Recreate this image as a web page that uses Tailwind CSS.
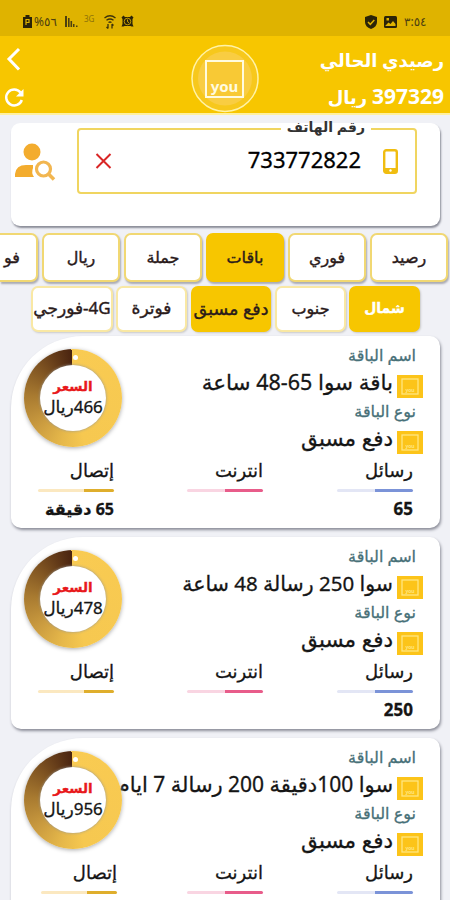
<!DOCTYPE html>
<html lang="ar" dir="rtl">
<head>
  <meta charset="UTF-8">
  <meta name="viewport" content="width=device-width, initial-scale=1.0">
  <title>رصيدي الحالي</title>
  <script src="https://cdn.jsdelivr.net/npm/@tailwindcss/browser@4"></script>
</head>
<body class="bg-[#f0f1f6] h-[900px] overflow-hidden whitespace-nowrap text-[#151515] font-['Noto_Sans','DejaVu_Sans',sans-serif]">

  <!-- shared icons -->
  <svg class="hidden">
    <symbol id="logo" viewBox="0 0 26 23">
      <rect width="26" height="23" fill="#fcc419"/>
      <rect x="5" y="4" width="16" height="15" fill="none" stroke="#ffe680" stroke-width="1.3"/>
      <text x="13" y="17.3" font-size="5" font-weight="bold" text-anchor="middle" fill="#ffe680" direction="ltr">you</text>
    </symbol>
  </svg>

  <!-- status bar -->
  <div dir="ltr" class="h-9 bg-[#dfb300] flex items-center pt-[7px] pl-[23px] pr-[22px] text-[#4d4010]">
    <svg class="w-[9px] h-[13px]" viewBox="0 0 9 13"><path d="M2.500 0h4v2H9v11H0V2h2.500z" fill="#2b2408"/><path d="M3 10V4.500h3v3H3" fill="none" stroke="#dfb300" stroke-width="1.200"/></svg>
    <span class="ml-[2px] w-[25px] text-[12px] leading-none">%٥٦</span>
    <svg class="ml-[6px] w-[13px] h-[11px]" viewBox="0 0 13 11" fill="#4d4010"><path d="M0 0h2v11H0zM3 2h1.600v9H3zM5.500 5h1.600v6H5.500zM8 8h1.500v3H8zM11 9.500h1.500V11H11z"/></svg>
    <span class="ml-[6px] w-[10px] text-[8px] leading-none -mt-1.5 text-[#8d7208]">3G</span>
    <svg class="ml-[10px] w-[12px] h-[14px]" viewBox="0 0 12 14" fill="none" stroke="#3d330b" stroke-width="1.300"><path d="M.5 3q5.500-4.500 11 0M2.500 5.300q3.500-2.600 7 0M4.500 7.500q1.500-1 3 0"/><path d="M4 9v4.500M2.500 12 4 13.500M8 13.500V9M9.500 10.500 8 9"/></svg>
    <svg class="ml-[5px] w-[13px] h-[13px]" viewBox="0 0 13 13"><path d="M.5 2.500 2.500.5 4 2h5l1.500-1.500 2 2L11.500 4v5l1 2.500h-2L9.500 11h-6l-1 .5h-2L1.500 9V4z" fill="#2b2408"/><circle cx="6.500" cy="6.500" r="3.300" fill="none" stroke="#dfb300" stroke-width=".8"/><path d="M6.500 4.500v2.200l1.500 1" fill="none" stroke="#dfb300" stroke-width=".9"/></svg>
    <svg class="ml-auto w-[12px] h-[14px]" viewBox="0 0 12 14"><path d="M6 0l6 2v5q0 5-6 7-6-2-6-7V2z" fill="#2b2408"/><path d="M3 7l2.300 2.300L9.300 5" fill="none" stroke="#dfb300" stroke-width="1.500"/></svg>
    <svg class="ml-[7px] w-[13px] h-[12px]" viewBox="0 0 13 12"><rect width="13" height="12" rx="1.500" fill="#2b2408"/><path d="M1.500 9.500l3-3 2 1.500 2.500-3 2.500 3v2h-10zM2.500 2h2.500v2.500H2.500z" fill="#dfb300"/></svg>
    <span class="ml-[7px] w-[24px] text-[12px] leading-none">٣:٥٤</span>
  </div>

  <!-- header -->
  <header class="h-[79px] bg-[#f7c600] border-b-2 border-[#fff0a0] grid grid-cols-3 text-white">
    <div class="pr-[6px] text-[18px] font-bold">
      <div class="h-[45px] leading-[48px]">رصيدي الحالي</div>
      <div class="h-[32px] leading-[30px]"><span class="text-[21px]">397329</span> ريال</div>
    </div>
    <div class="flex justify-center pt-[8px]">
      <svg class="w-[68px] h-[70px] shrink-0" viewBox="0 0 68 70">
        <circle cx="34" cy="34.500" r="33" fill="#f7c81c" stroke="#fff3a8" stroke-width="1.500"/>
        <circle cx="34" cy="34.500" r="27" fill="#f9cd42"/>
        <rect x="15" y="17" width="37" height="36" fill="#f8c935" stroke="#fffbe0" stroke-width="2"/>
        <text x="33.500" y="48" font-size="15" font-weight="bold" text-anchor="middle" fill="#fffbe0" direction="ltr">you</text>
      </svg>
    </div>
    <div class="flex flex-col items-end pl-[4px] pt-[11px]">
      <svg class="w-[18px] h-[24px]" viewBox="0 0 18 24"><path d="M15 2 5 12l10 10.500" fill="none" stroke="#fff" stroke-width="3"/></svg>
      <svg class="mt-[16px] w-[21px] h-[21px]" viewBox="0 0 21 21"><path d="M16.500 5.500A8 8 0 1 0 17.800 13" fill="none" stroke="#fff" stroke-width="2.500"/><path d="M19.500 2v7.500H12z" fill="#fff"/></svg>
    </div>
  </header>

  <!-- phone number -->
  <section class="mt-[8px] mr-[10px] w-[429px] h-[103px] pt-[5px] bg-white rounded-[9px] shadow-[1px_2px_2px_#8b8d98] flex">
    <div class="relative mr-[23px] w-[340px] h-[66px] border-2 border-[#f0d560] rounded-[4px] flex items-center pr-[17px] pl-[16px]">
      <span class="absolute -top-[5px] right-[44px] px-[6px] bg-white text-[14px] leading-[4px] h-[8px] font-bold text-[#333]">رقم الهاتف</span>
      <svg class="w-[15px] h-[25px]" viewBox="0 0 15 25"><rect x="1.200" y="1.200" width="12.600" height="22.600" rx="2" fill="#fff" stroke="#f0bd10" stroke-width="2.400"/><path d="M1 19h13v5H1z" fill="#f0bd10"/><circle cx="7.500" cy="21.500" r="1.200" fill="#fff"/></svg>
      <span class="mr-[22px] text-[22px] leading-none text-black -mt-[4px] [-webkit-text-stroke:0.3px]">733772822</span>
      <svg class="mr-auto w-[17px] h-[16px]" viewBox="0 0 17 16"><path d="M1.500 1l14 14M15.500 1l-14 14" stroke="#d92626" stroke-width="2"/></svg>
    </div>
    <svg class="mr-[21px] mt-[15px] w-[42px] h-[38px]" viewBox="0 0 42 38"><circle cx="18" cy="9" r="8.500" fill="#f3ac2e"/><path d="M1 34v-3q1-9 11-9h7v3q-2 5 1 9z" fill="#f3ac2e"/><circle cx="29.500" cy="26" r="7" fill="none" stroke="#f2b650" stroke-width="3.200"/><path d="M34.500 31l5.500 5.500" stroke="#f2b650" stroke-width="3.500"/></svg>
  </section>

  <!-- service tabs -->
  <nav class="mt-[7px] mr-[2px] h-[49px] flex gap-[4px] text-[16px] leading-[44px] text-center text-[#2a1a1a] [-webkit-text-stroke:0.4px] *:shrink-0 *:w-[78px] *:h-[49px] *:rounded-[7px] *:border-2 *:border-[#f1d873] *:bg-white *:shadow-[1px_2px_2px_#a9aab2]">
    <div>رصيد</div>
    <div>فوري</div>
    <div class="bg-[#f7c600]! border-[#f7c600]!">باقات</div>
    <div>جملة</div>
    <div>ريال</div>
    <div class="w-[38px]! rounded-l-none! border-l-0! text-right pr-[16px]">فو</div>
  </nav>

  <!-- package groups -->
  <nav class="mt-[4px] mr-[30px] h-[46px] flex gap-[3px] text-[16px] leading-[40px] text-center text-[#2a1a1a] [-webkit-text-stroke:0.4px] *:shrink-0 *:h-[46px] *:rounded-[7px] *:border-2 *:border-[#f9e8a4] *:bg-white *:shadow-[1px_1px_2px_#c9c9c9]">
    <div class="w-[71px] bg-[#f7c600]! border-[#f7c600]! text-white font-bold text-[14px]">شمال</div>
    <div class="w-[71px]">جنوب</div>
    <div class="w-[80px] bg-[#f7c600]! border-[#f7c600]! flex justify-center mx-[1px] text-[17.500px]">دفع مسبق</div>
    <div class="w-[71px] text-[17px]">فوترة</div>
    <div class="w-[82px] flex justify-center text-[17px]">4G-فورجي</div>
  </nav>

  <main id="packages" class="mt-[4px] mr-[10px] w-[429px] flex flex-col gap-[9px] [-webkit-text-stroke:0.3px]"></main>

  <script>
    const packages = [
      { name: 'باقة سوا 65-48 ساعة', size: 21.5, price: '466', sms: '65', calls: '65 دقيقة', shift: 1 },
      { name: 'سوا 250 رسالة 48 ساعة', size: 20.5, price: '478', sms: '250', calls: '', shift: 1 },
      { name: 'سوا 100دقيقة 200 رسالة 7 ايام', size: 21, price: '956', sms: '', calls: '', shift: 4 },
    ];

    document.getElementById('packages').innerHTML = packages.map((p) => `
      <article class="relative h-[192px] pt-[9px] bg-white rounded-[10px] rounded-tl-[72px] shadow-[1px_2px_3px_#8b8d98]">
        <div class="pr-[17px]">
          <div class="pr-[7px] h-[22px] leading-[21px] text-[16px] text-[#477078]">اسم الباقة</div>
          <div class="flex h-[34px] leading-[30px]" style="font-size: ${p.size}px">
            <svg class="mt-[8px] ml-[4px] w-[26px] h-[23px] shrink-0"><use href="#logo"/></svg><span>${p.name}</span>
          </div>
          <div class="pr-[7px] h-[22px] leading-[21px] text-[16px] text-[#477078]">نوع الباقة</div>
          <div class="flex h-[34px] text-[21.500px] leading-[29px]">
            <svg class="mt-[8px] ml-[4px] w-[26px] h-[23px] shrink-0"><use href="#logo"/></svg><span>دفع مسبق</span>
          </div>
        </div>
        <div class="flex gap-[74px] pr-[27px] text-[18px] *:w-[76px]">
          <div>
            <div class="h-[32px] leading-[27px]">رسائل</div>
            <div class="h-[3px] rounded-full bg-linear-to-l from-[#7b93d8] from-50% to-[#e3e6f5] to-50%"></div>
            <div class="h-[32px] leading-[34px] text-[17px] font-bold">${p.sms}</div>
          </div>
          <div>
            <div class="h-[32px] leading-[27px]">انترنت</div>
            <div class="h-[3px] rounded-full bg-linear-to-l from-[#e85c8a] from-50% to-[#f9d5e2] to-50%"></div>
          </div>
          <div style="margin-right: -${p.shift}px">
            <div class="h-[32px] leading-[27px]">إتصال</div>
            <div class="h-[3px] rounded-full bg-linear-to-l from-[#dfae2c] from-40% to-[#fbe8c0] to-40%"></div>
            <div class="h-[32px] leading-[34px] text-[16px] font-bold">${p.calls}</div>
          </div>
        </div>
        <div class="absolute left-[13px] top-[13px] w-[98px] h-[98px] rounded-full p-[16px] shadow-[0_1px_4px_#aaa] bg-[conic-gradient(#f9cb52_0%,#f6c850_46%,#e6b84a_54%,#cb9c40_64%,#a87a30_76%,#7a4f20_88%,#4a2410_99.500%,#f9cb52_99.500%)]">
          <div class="w-[66px] h-[66px] rounded-full bg-white shadow-[0_0_3px_#999] flex flex-col items-center pt-[11px]">
            <div class="h-[20px] leading-[20px] text-[13.500px] font-bold text-[#e8191c]">السعر</div>
            <div class="h-[22px] leading-[22px] text-[17px]">${p.price}ريال</div>
          </div>
          <span class="absolute left-[49px] top-[6px] w-[5px] h-[5px] rounded-full bg-white"></span>
        </div>
      </article>`).join('');
  </script>
</body>
</html>
